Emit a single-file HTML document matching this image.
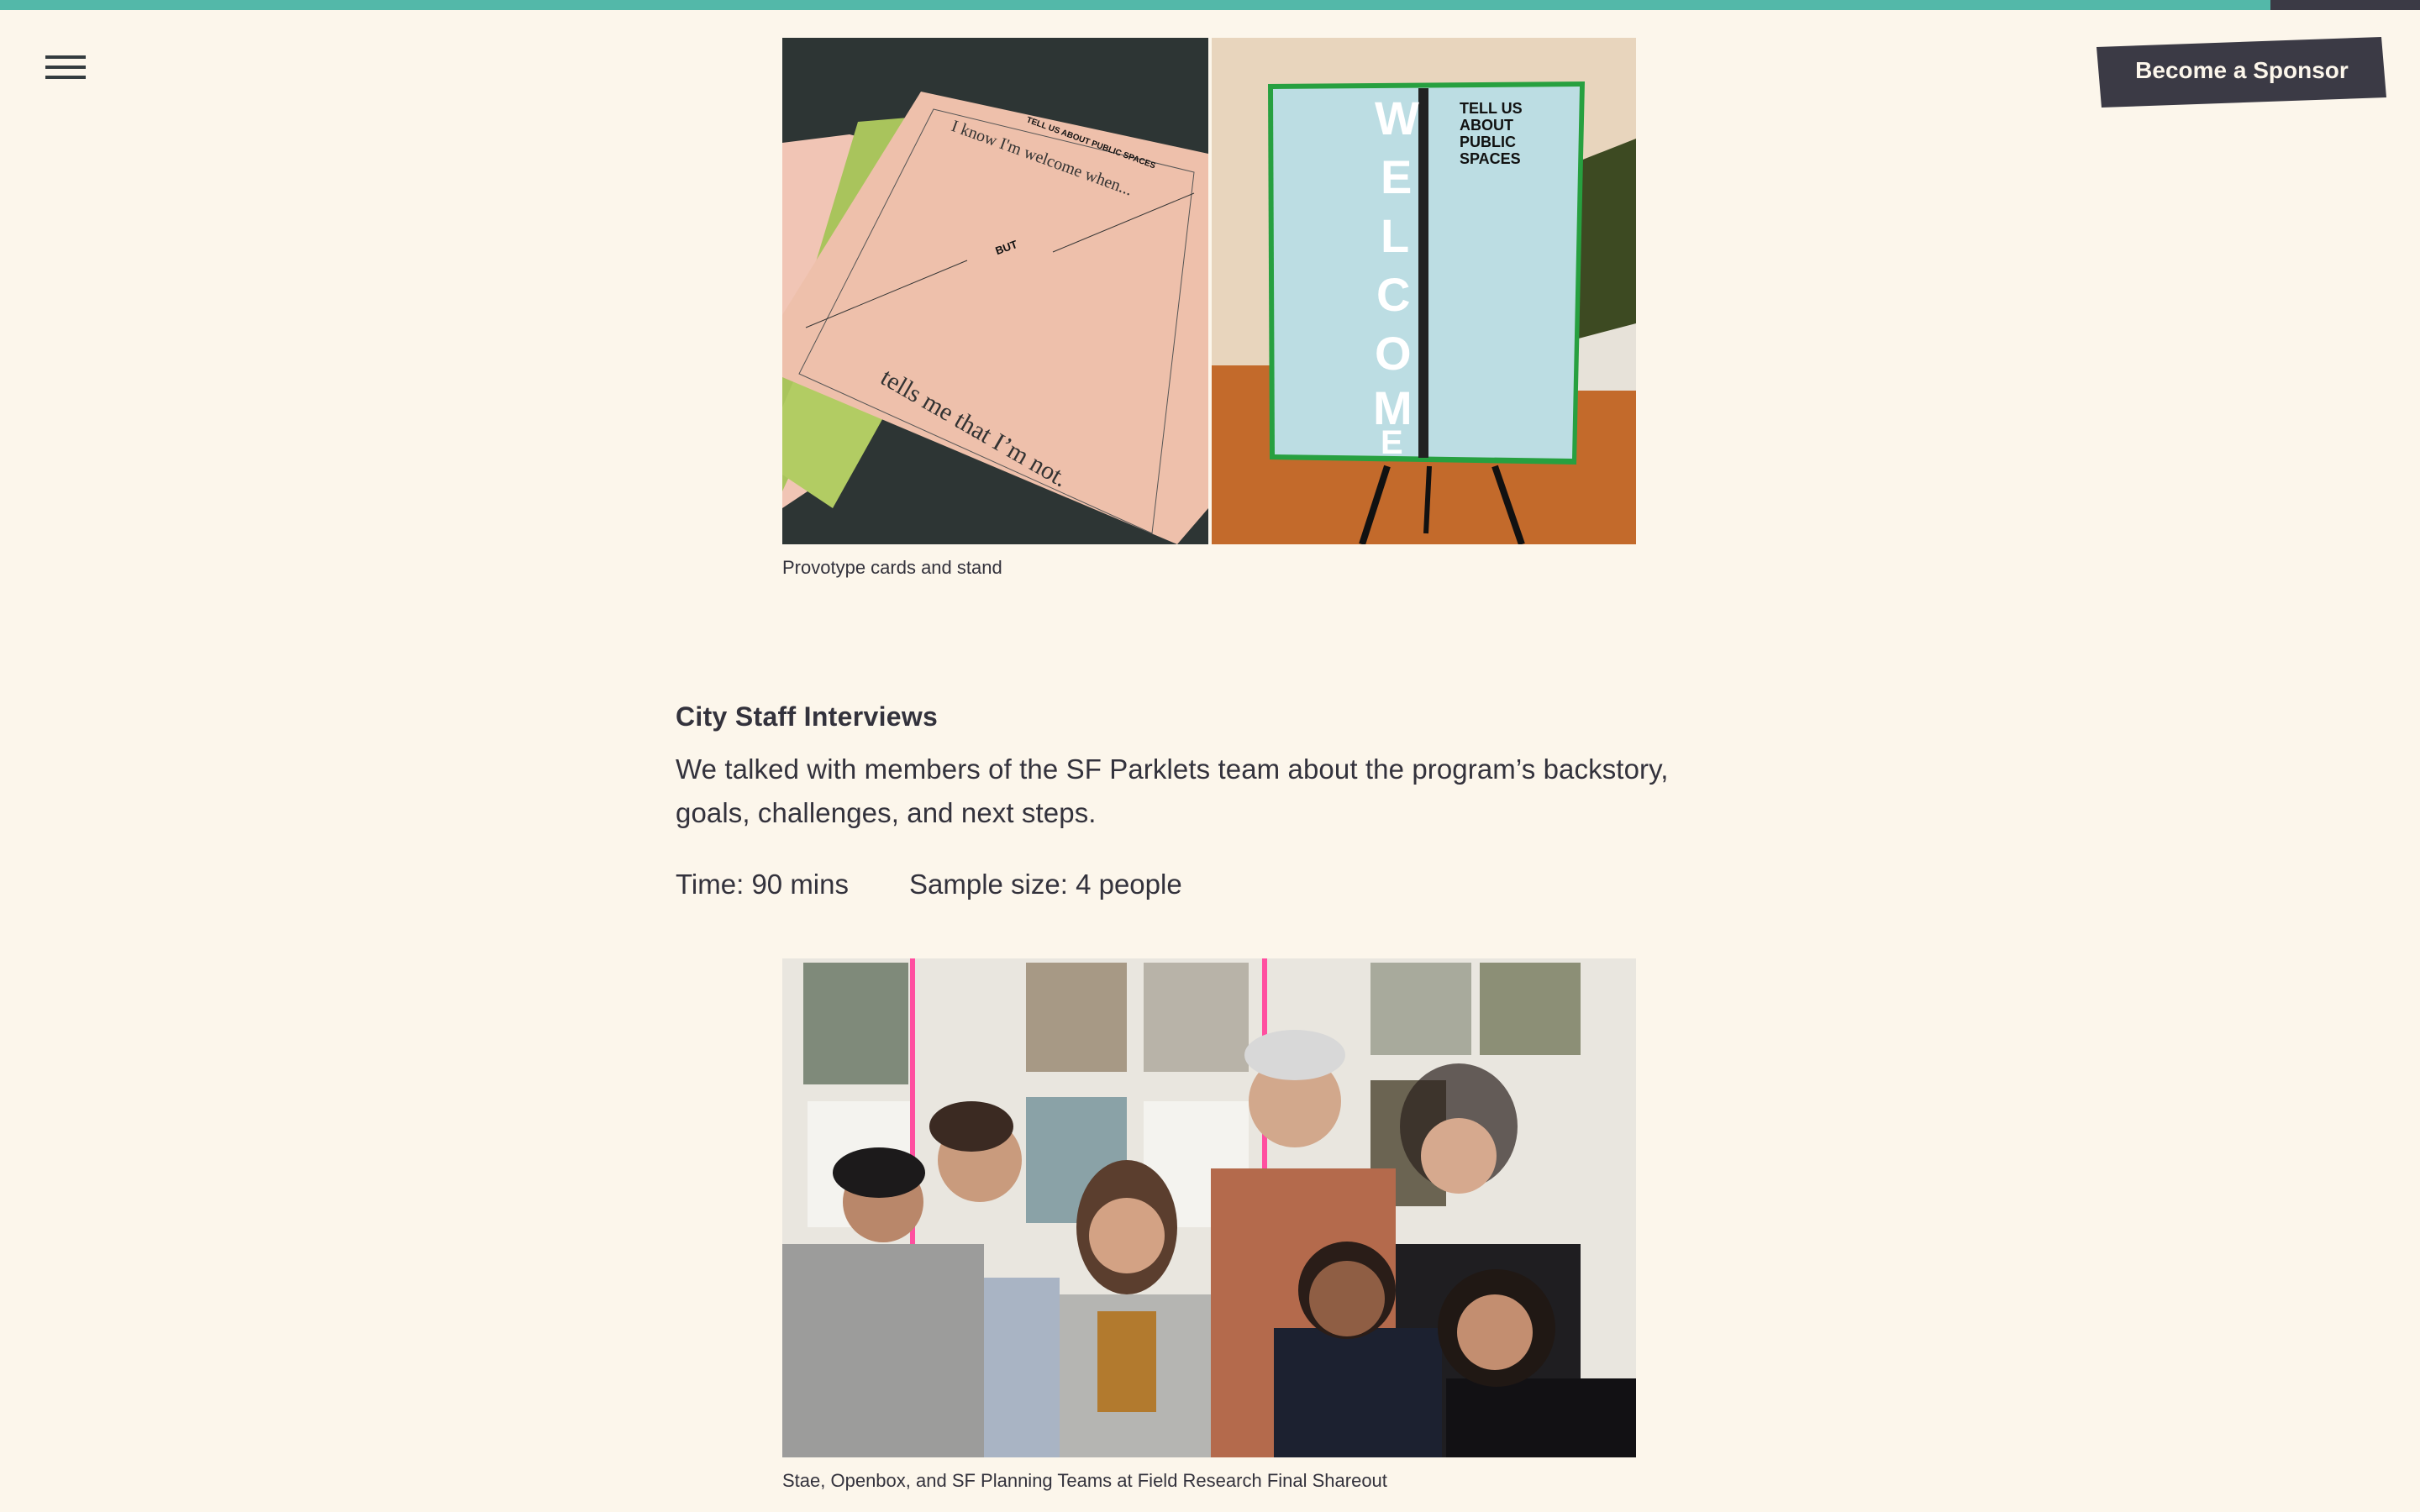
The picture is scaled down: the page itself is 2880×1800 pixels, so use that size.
<!DOCTYPE html>
<html><head><meta charset="utf-8"><style>
html,body{margin:0;padding:0;}
body{width:2880px;height:1800px;background:#fcf6eb;position:relative;overflow:hidden;font-family:"Liberation Sans",sans-serif;color:#33323c;}
.abs{position:absolute;white-space:nowrap;}
</style></head><body>
<div class="abs" style="left:0;top:0;width:2702px;height:12px;background:#53b8a9"></div>
<div class="abs" style="left:2702px;top:0;width:178px;height:12px;background:#3b3a45"></div>
<div class="abs" style="left:54px;top:66px;width:48px;height:4px;background:#343c3f"></div>
<div class="abs" style="left:54px;top:78px;width:48px;height:4px;background:#343c3f"></div>
<div class="abs" style="left:54px;top:90px;width:48px;height:4px;background:#343c3f"></div>
<svg class="abs" style="left:0;top:0" width="2880" height="140"><polygon points="2495,56 2834,44 2840,116 2501,128" fill="#3b3a45"/></svg>
<div class="abs" style="left:2500px;top:64px;width:336px;text-align:center;color:#fcf6eb;font-weight:bold;font-size:28px;line-height:40px">Become a Sponsor</div>

<!-- image 1 -->
<svg class="abs" style="left:931px;top:45px" width="1016" height="603" viewBox="0 0 1016 603">
<rect x="0" y="0" width="507" height="603" fill="#2d3534"/>
<polygon points="0,125 80,115 120,125 60,520 0,560" fill="#f1c5b5"/>
<polygon points="90,100 150,95 200,105 0,540 0,400" fill="#a9c45c"/>
<polygon points="140,110 260,100 300,130 60,560 0,520 0,440" fill="#b2cc63"/>
<polygon points="165,64 507,138 507,560 470,603 0,404 0,330" fill="#eec0ab"/>
<polygon points="180,85 490,160 440,590 20,400" fill="none" stroke="#555" stroke-width="1"/>
<line x1="28" y1="345" x2="220" y2="265" stroke="#333" stroke-width="1"/>
<line x1="322" y1="255" x2="490" y2="185" stroke="#333" stroke-width="1"/>
<text x="200" y="110" font-family="Liberation Serif" font-size="20" fill="#333" transform="rotate(20 200 110)">I know I'm welcome when...</text>
<text x="290" y="100" font-size="10" font-weight="bold" fill="#111" transform="rotate(20 290 100)">TELL US ABOUT PUBLIC SPACES</text>
<text x="255" y="255" font-size="13" font-weight="bold" fill="#111" transform="rotate(-20 265 255)">BUT</text>
<text x="115" y="410" font-family="Liberation Serif" font-size="30" fill="#333" transform="rotate(30 115 410)">tells me that I’m not.</text>
<rect x="511" y="0" width="505" height="603" fill="#d98a4a"/>
<rect x="511" y="0" width="505" height="390" fill="#e8d5bd"/>
<rect x="511" y="390" width="505" height="213" fill="#c36a2b"/>
<rect x="845" y="290" width="171" height="130" fill="#e7e2d9"/>
<polygon points="940,150 1016,120 1016,340 940,360" fill="#3d4a22"/>
<polygon points="578,55 955,52 945,508 580,502" fill="#27a040"/>
<polygon points="584,61 949,58 940,501 586,496" fill="#bcdde3"/>
<rect x="757" y="60" width="12" height="440" fill="#222"/>
<text x="705" y="115" font-size="56" font-weight="bold" fill="#fff">W</text>
<text x="712" y="185" font-size="56" font-weight="bold" fill="#fff">E</text>
<text x="712" y="255" font-size="56" font-weight="bold" fill="#fff">L</text>
<text x="707" y="325" font-size="56" font-weight="bold" fill="#fff">C</text>
<text x="705" y="395" font-size="56" font-weight="bold" fill="#fff">O</text>
<text x="703" y="460" font-size="56" font-weight="bold" fill="#fff">M</text>
<text x="712" y="495" font-size="40" font-weight="bold" fill="#fff">E</text>
<text x="806" y="90" font-size="18" font-weight="bold" fill="#111">TELL US</text>
<text x="806" y="110" font-size="18" font-weight="bold" fill="#111">ABOUT</text>
<text x="806" y="130" font-size="18" font-weight="bold" fill="#111">PUBLIC</text>
<text x="806" y="150" font-size="18" font-weight="bold" fill="#111">SPACES</text>
<line x1="720" y1="510" x2="690" y2="603" stroke="#111" stroke-width="8"/>
<line x1="848" y1="510" x2="880" y2="603" stroke="#111" stroke-width="8"/>
<line x1="770" y1="510" x2="766" y2="590" stroke="#111" stroke-width="6"/>
</svg>
<div class="abs" style="left:931px;top:662px;font-size:22px;line-height:28px">Provotype cards and stand</div>

<div class="abs" style="left:804px;top:833px;font-size:32px;font-weight:bold;line-height:40px;letter-spacing:0.3px">City Staff Interviews</div>
<div class="abs" style="left:804px;top:890px;font-size:33px;line-height:52px;letter-spacing:0.1px">We talked with members of the SF Parklets team about the program’s backstory,<br>goals, challenges, and next steps.</div>
<div class="abs" style="left:804px;top:1027px;font-size:33px;line-height:52px">Time: 90 mins</div>
<div class="abs" style="left:1082px;top:1027px;font-size:33px;line-height:52px">Sample size: 4 people</div>

<!-- image 2 -->
<svg class="abs" style="left:931px;top:1141px" width="1016" height="594" viewBox="0 0 1016 594">
<rect width="1016" height="594" fill="#e9e6df"/>
<rect x="25" y="5" width="125" height="145" fill="#7f8a7a"/>
<rect x="290" y="5" width="120" height="130" fill="#a79985"/>
<rect x="430" y="5" width="125" height="130" fill="#b8b3a8"/>
<rect x="700" y="5" width="120" height="110" fill="#a8aa9c"/>
<rect x="830" y="5" width="120" height="110" fill="#8c8f76"/>
<rect x="30" y="170" width="125" height="150" fill="#f4f3ef"/>
<rect x="290" y="165" width="120" height="150" fill="#8aa2a7"/>
<rect x="430" y="170" width="125" height="150" fill="#f4f3ef"/>
<rect x="700" y="145" width="90" height="150" fill="#6b6452"/>
<rect x="25" y="390" width="95" height="140" fill="#b29a8a"/>
<rect x="152" y="0" width="6" height="350" fill="#ff4fa0"/>
<rect x="571" y="0" width="6" height="260" fill="#ff4fa0"/>
<rect x="100" y="380" width="230" height="214" fill="#a9b4c4"/>
<circle cx="235" cy="240" r="50" fill="#c99b7d"/>
<ellipse cx="225" cy="200" rx="50" ry="30" fill="#3b2a22"/>
<circle cx="120" cy="290" r="48" fill="#b9876a"/>
<ellipse cx="115" cy="255" rx="55" ry="30" fill="#1c1a1b"/>
<rect x="0" y="340" width="240" height="254" fill="#9c9c9b"/>
<rect x="330" y="400" width="200" height="194" fill="#b5b5b2"/>
<rect x="375" y="420" width="70" height="120" fill="#b27a2e"/>
<ellipse cx="410" cy="320" rx="60" ry="80" fill="#5b3e2e"/>
<circle cx="410" cy="330" r="45" fill="#d3a284"/>
<rect x="510" y="250" width="220" height="344" fill="#b46a4c"/>
<circle cx="610" cy="170" r="55" fill="#d2a88c"/>
<ellipse cx="610" cy="115" rx="60" ry="30" fill="#d8d8d8"/>
<rect x="730" y="340" width="220" height="254" fill="#1f1e21"/>
<ellipse cx="805" cy="200" rx="70" ry="75" fill="#2a201c" opacity="0.7"/>
<circle cx="805" cy="235" r="45" fill="#d6a98e"/>
<rect x="585" y="440" width="200" height="154" fill="#1c2130"/>
<circle cx="672" cy="395" r="58" fill="#2a1d18"/>
<circle cx="672" cy="405" r="45" fill="#8f5e44"/>
<rect x="790" y="500" width="226" height="94" fill="#121114"/>
<circle cx="850" cy="440" r="70" fill="#201814"/>
<circle cx="848" cy="445" r="45" fill="#c38e70"/>
</svg>
<div class="abs" style="left:931px;top:1749px;font-size:22px;line-height:28px">Stae, Openbox, and SF Planning Teams at Field Research Final Shareout</div>
</body></html>
